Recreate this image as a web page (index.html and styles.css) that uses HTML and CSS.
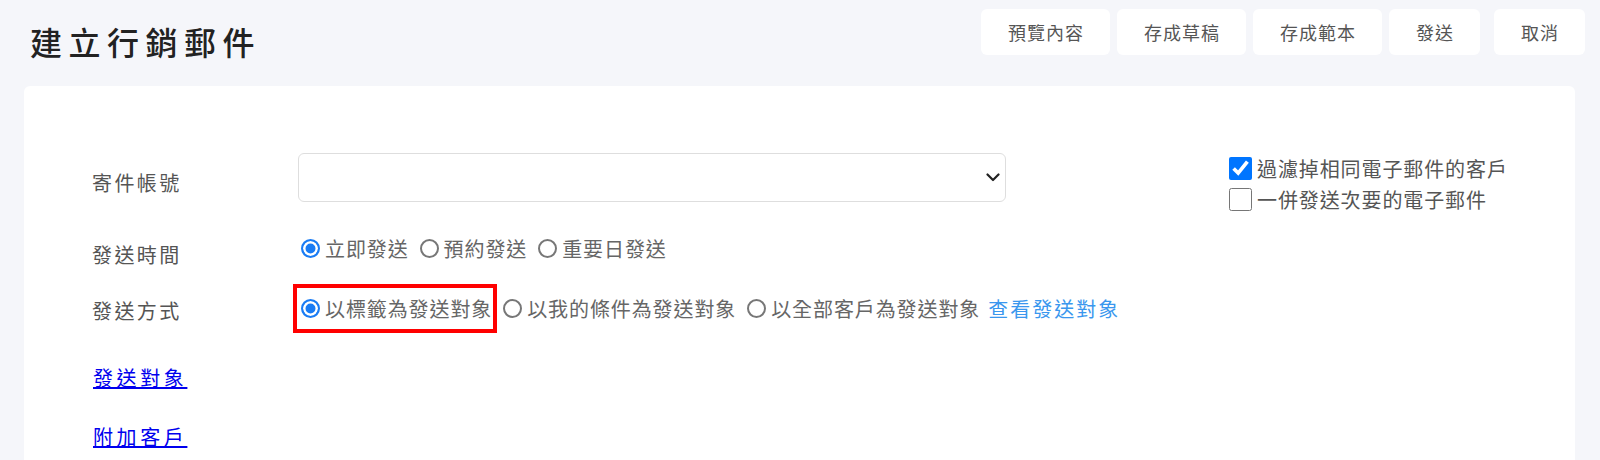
FILE: index.html
```html
<!DOCTYPE html>
<html lang="zh-TW">
<head>
    <meta charset="UTF-8">
    <meta name="viewport" content="width=device-width, initial-scale=1.0">
    <title>建立行銷郵件</title>
    <link rel="stylesheet" href="styles.css">
</head>
<body>
    <header class="page-header">
        <h1 class="page-title">建立行銷郵件</h1>
        <div class="toolbar">
            <button type="button" class="tool-btn">預覽內容</button>
            <button type="button" class="tool-btn">存成草稿</button>
            <button type="button" class="tool-btn">存成範本</button>
            <button type="button" class="tool-btn">發送</button>
            <button type="button" class="tool-btn tool-btn-last">取消</button>
        </div>
    </header>

    <div class="card">
        <form class="mail-form">
            <div class="form-row row-account">
                <label class="row-label" for="sender">寄件帳號</label>
                <div class="select-wrap">
                    <select id="sender" class="form-select"></select>
                    <svg class="select-arrow" width="14" height="9" viewBox="0 0 14 9">
                        <path d="M1.5 1.5 L7 7 L12.5 1.5" fill="none" stroke="#222" stroke-width="2.2" stroke-linecap="round" stroke-linejoin="round"/>
                    </svg>
                </div>
            </div>

            <div class="form-row row-time">
                <span class="row-label">發送時間</span>
                <div class="radio-group">
                    <label class="radio-item"><input type="radio" name="send-time" checked>立即發送</label>
                    <label class="radio-item"><input type="radio" name="send-time">預約發送</label>
                    <label class="radio-item"><input type="radio" name="send-time">重要日發送</label>
                </div>
            </div>

            <div class="form-row row-method">
                <span class="row-label">發送方式</span>
                <div class="radio-group">
                    <label class="radio-item highlight"><input type="radio" name="send-method" checked>以標籤為發送對象</label>
                    <label class="radio-item"><input type="radio" name="send-method">以我的條件為發送對象</label>
                    <label class="radio-item"><input type="radio" name="send-method">以全部客戶為發送對象</label>
                    <a href="#" class="view-link">查看發送對象</a>
                </div>
            </div>

            <div class="form-row row-link">
                <a href="#" class="row-link-text">發送對象</a>
            </div>

            <div class="form-row row-link row-link-last">
                <a href="#" class="row-link-text">附加客戶</a>
            </div>
        </form>

        <div class="options">
            <label class="check-item"><input type="checkbox" checked>過濾掉相同電子郵件的客戶</label>
            <label class="check-item"><input type="checkbox">一併發送次要的電子郵件</label>
        </div>
    </div>
</body>
</html>
```

FILE: styles.css
```css
* {
    box-sizing: border-box;
    margin: 0;
    padding: 0;
}

body {
    font-family: "Noto Sans CJK TC", "Noto Sans", sans-serif;
    background-color: #f5f6fa;
    color: #555;
    height: 460px;
    overflow: hidden;
}

.page-header {
    display: flex;
    justify-content: space-between;
    align-items: flex-start;
    height: 86px;
    padding: 0 15px 0 30px;
}

.page-title {
    margin-top: 23px;
    font-size: 32px;
    line-height: 36px;
    font-weight: 500;
    letter-spacing: 6.5px;
    color: #222;
}

.toolbar {
    display: flex;
    gap: 7px;
    margin-top: 9px;
}

.tool-btn {
    height: 46px;
    padding: 0 26px 0 27px;
    background-color: #fff;
    border: none;
    border-radius: 6px;
    font-family: inherit;
    font-size: 18px;
    letter-spacing: 1px;
    color: #555;
    cursor: pointer;
}

.tool-btn-last {
    margin-left: 7px;
}

.card {
    display: flex;
    align-items: flex-start;
    margin: 0 25px 0 24px;
    min-height: 400px;
    padding: 67px 0 0 68px;
    background-color: #fff;
    border-radius: 6px 6px 0 0;
}

.mail-form {
    width: 914px;
    flex-shrink: 0;
}

.form-row {
    display: grid;
    grid-template-columns: 206px 708px;
    align-items: center;
    height: 49px;
}

.row-label {
    font-size: 20px;
    letter-spacing: 2.4px;
    color: #555;
}

.row-account .row-label {
    padding-top: 9px;
}

.row-time {
    margin-top: 22px;
}

.row-time .row-label {
    padding-top: 11px;
}

.row-method {
    margin-top: 11px;
}

.row-method .row-label {
    padding-top: 4px;
}

.row-link {
    display: flex;
    height: 48px;
    margin-top: 20px;
}

.row-link-last {
    margin-top: 11px;
}

.row-link-text {
    margin-left: 1px;
    font-size: 20px;
    letter-spacing: 3.6px;
    color: #0000ee;
}

.select-wrap {
    position: relative;
    height: 49px;
}

.form-select {
    appearance: none;
    width: 100%;
    height: 49px;
    padding: 0 40px 0 12px;
    border: 1px solid #dedede;
    border-radius: 6px;
    background-color: #fff;
    font-family: inherit;
    font-size: 18px;
}

.select-arrow {
    position: absolute;
    right: 6px;
    top: 20px;
}

.radio-group {
    display: flex;
    align-items: center;
    width: max-content;
    white-space: nowrap;
}

.radio-item {
    display: flex;
    flex-shrink: 0;
    align-items: center;
    gap: 5px;
    margin-left: 3px;
    margin-right: 8px;
    font-size: 20px;
    letter-spacing: 0.9px;
    color: #666;
    cursor: pointer;
}

.radio-item input {
    appearance: none;
    flex-shrink: 0;
    width: 19px;
    height: 19px;
    margin: 0;
    border: 2px solid #777;
    border-radius: 50%;
    background-color: #fff;
}

.radio-item input:checked {
    border-color: #1a7cf4;
    background-color: #1a7cf4;
    box-shadow: inset 0 0 0 2.5px #fff;
}

.highlight {
    height: 49px;
    margin-left: -5px;
    margin-right: 3px;
    padding: 0 1px 0 4px;
    border: 4px solid #ff0000;
}

.view-link {
    flex-shrink: 0;
    font-size: 20px;
    letter-spacing: 2px;
    color: #3a97ee;
    text-decoration: none;
}

.options {
    display: flex;
    flex-direction: column;
    gap: 8px;
    margin: 4px 0 0 223px;
    white-space: nowrap;
}

.check-item {
    display: flex;
    align-items: center;
    gap: 5px;
    height: 23px;
    font-size: 20px;
    letter-spacing: 0.9px;
    color: #555;
    cursor: pointer;
}

.check-item input {
    flex-shrink: 0;
    width: 23px;
    height: 23px;
    margin: 0;
}
```
